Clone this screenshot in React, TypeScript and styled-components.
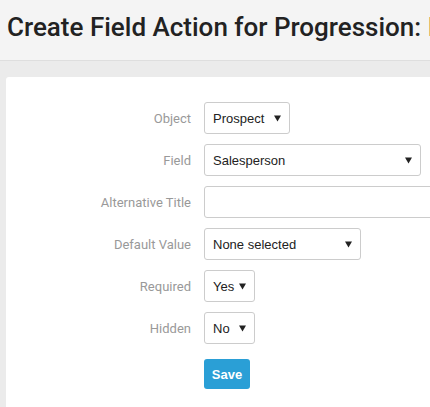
import React from "react";
import styled, { createGlobalStyle } from "styled-components";

const Global = createGlobalStyle`
  html, body { margin: 0; padding: 0; }
  body { background: #ebebeb; font-family: Roboto, "Liberation Sans", sans-serif; overflow: hidden; }
  #root { width: 430px; height: 407px; overflow: hidden; }
`;

const Page = styled.div`
  width: 430px;
  height: 407px;
  overflow: hidden;
  background: #ebebeb;
  display: flex;
  flex-direction: column;
`;

const Header = styled.header`
  height: 61px;
  background: #f4f4f4;
  border-bottom: 1px solid #dedede;
  box-sizing: border-box;
  padding: 12px 0 0 7px;
  white-space: nowrap;
  overflow: hidden;
  flex-shrink: 0;
`;

const Title = styled.h1`
  margin: 0;
  font-family: Roboto, sans-serif;
  font-weight: 500;
  font-size: 26px;
  line-height: 30px;
  color: #222;
`;

const Accent = styled.span`
  color: #b87a3d;
`;

const Body = styled.div`
  flex: 1;
  padding: 16px 0 0 6px;
`;

const Panel = styled.section`
  background: #fff;
  width: 500px;
  height: 400px;
  border-radius: 3px;
  box-sizing: border-box;
  padding: 25px 0 0 0;
  display: flex;
  flex-direction: column;
  gap: 10px;
`;

const Row = styled.div<{ $top?: number }>`
  display: flex;
  align-items: center;
  margin-top: ${(p) => p.$top ?? 0}px;
`;

const Label = styled.label`
  width: 198px;
  text-align: right;
  font-family: Roboto, sans-serif;
  font-size: 13px;
  color: #999;
  padding-right: 13px;
  box-sizing: border-box;
`;

const SelectWrap = styled.div<{ $w: number }>`
  position: relative;
  width: ${(p) => p.$w}px;
  height: 32px;
`;

const Select = styled.select`
  appearance: none;
  -webkit-appearance: none;
  width: 100%;
  height: 100%;
  border: 1px solid #ccc;
  border-radius: 3px;
  background: #fff;
  font-family: "Liberation Sans", Arial, sans-serif;
  font-size: 13px;
  color: #222;
  padding: 0 0 0 8px;
  box-sizing: border-box;
  outline: none;
`;

const Arrow = styled.svg`
  position: absolute;
  right: 9px;
  top: 13px;
  pointer-events: none;
`;

const TextInput = styled.input`
  width: 240px;
  height: 32px;
  border: 1px solid #ccc;
  border-radius: 3px;
  box-sizing: border-box;
  outline: none;
`;

const SaveButton = styled.button`
  width: 46px;
  height: 30px;
  border: none;
  border-radius: 3px;
  background: #2a9fd6;
  color: #fff;
  font-family: "Liberation Sans", Arial, sans-serif;
  font-weight: bold;
  font-size: 13px;
  padding: 0;
  margin-left: 198px;
`;

const Dropdown = ({ w, value }: { w: number; value: string }) => (
  <SelectWrap $w={w}>
    <Select defaultValue={value}>
      <option>{value}</option>
    </Select>
    <Arrow width="7" height="7" viewBox="0 0 7 7">
      <path d="M0 0.5 H7 L3.5 6.5 Z" fill="#222" />
    </Arrow>
  </SelectWrap>
);

export default function App() {
  return (
    <>
      <Global />
      <Page>
        <Header>
          <Title>
            Create Field Action for Progression: <Accent>Lead</Accent>
          </Title>
        </Header>
        <Body>
          <Panel>
            <Row>
              <Label>Object</Label>
              <Dropdown w={86} value="Prospect" />
            </Row>
            <Row>
              <Label>Field</Label>
              <Dropdown w={217} value="Salesperson" />
            </Row>
            <Row>
              <Label>Alternative Title</Label>
              <TextInput />
            </Row>
            <Row>
              <Label>Default Value</Label>
              <Dropdown w={157} value="None selected" />
            </Row>
            <Row>
              <Label>Required</Label>
              <Dropdown w={51} value="Yes" />
            </Row>
            <Row>
              <Label>Hidden</Label>
              <Dropdown w={51} value="No" />
            </Row>
            <Row $top={5}>
              <SaveButton>Save</SaveButton>
            </Row>
          </Panel>
        </Body>
      </Page>
    </>
  );
}
